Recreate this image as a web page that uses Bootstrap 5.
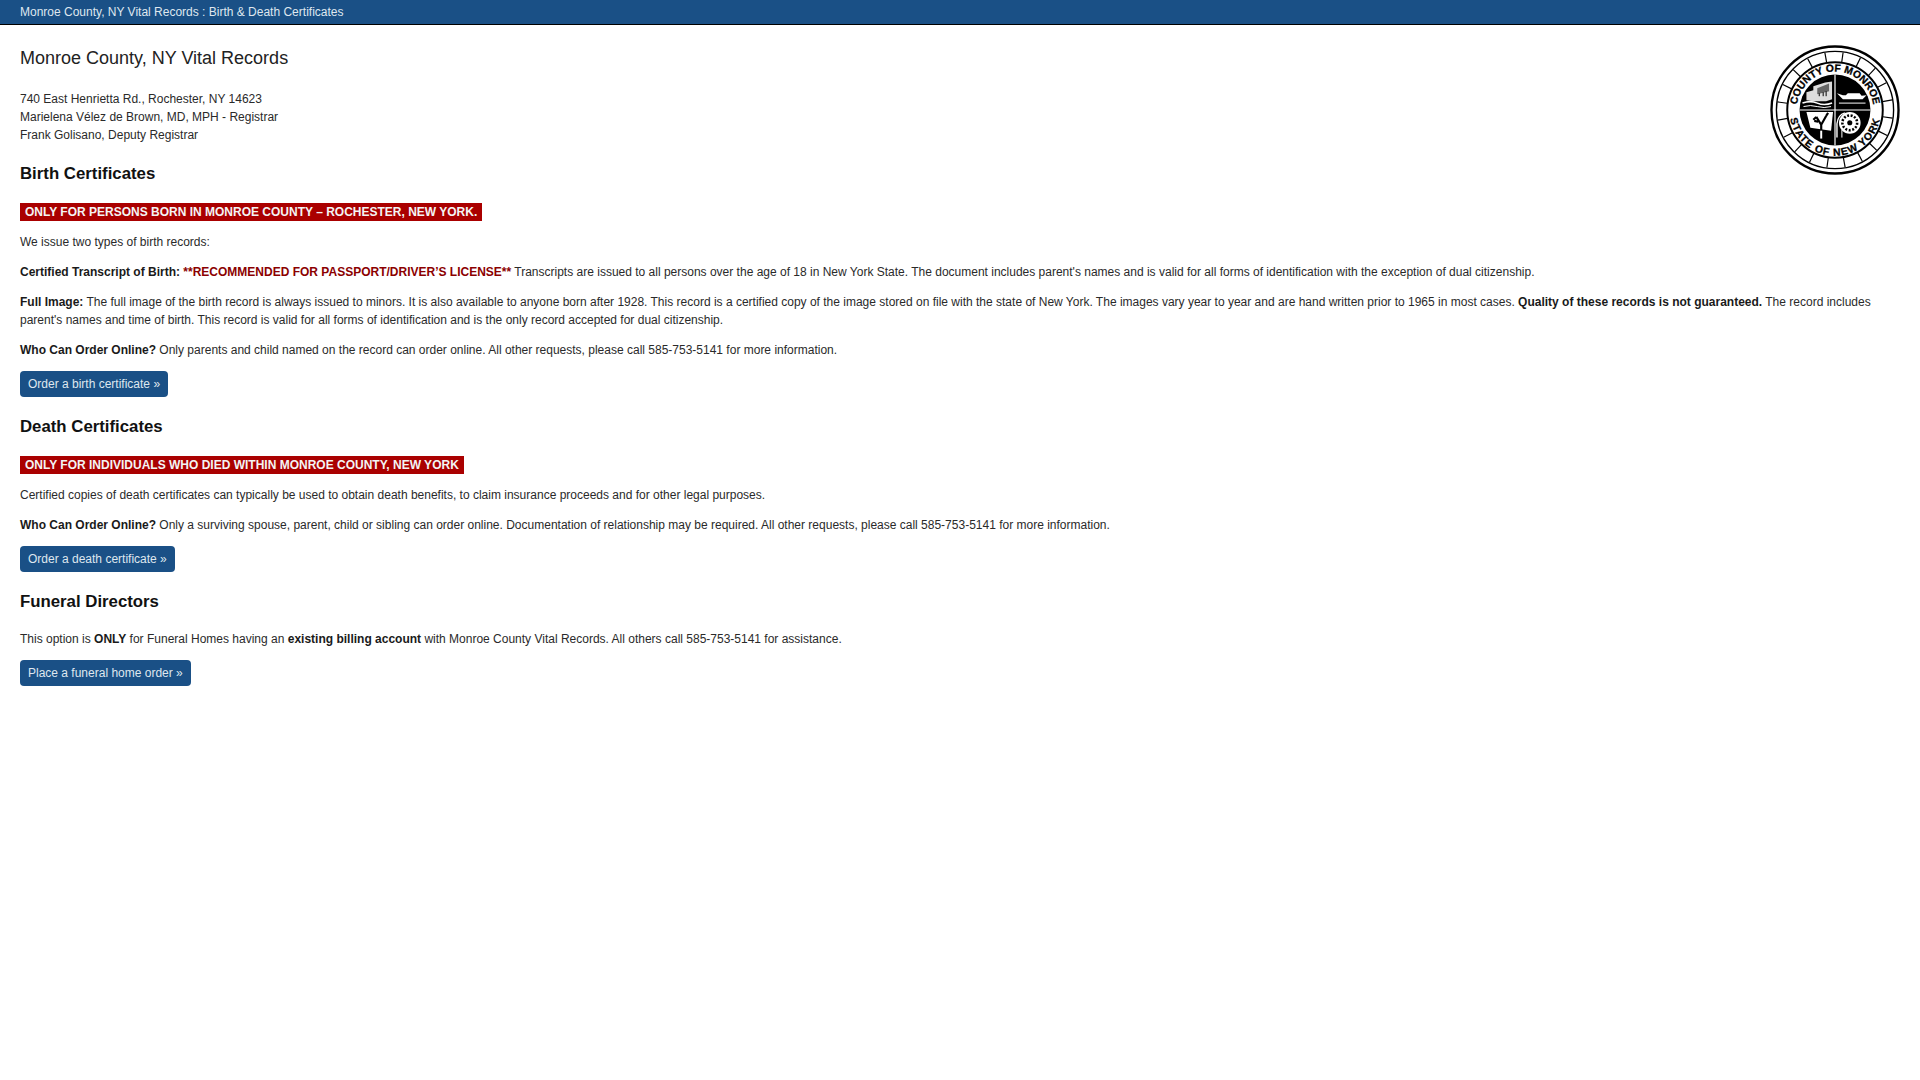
<!DOCTYPE html>
<html lang="en">
<head>
  <meta charset="UTF-8">
  <meta name="viewport" content="width=device-width, initial-scale=1.0">
  <title>Monroe County, NY Vital Records : Birth &amp; Death Certificates</title>
  <link href="https://cdn.jsdelivr.net/npm/bootstrap@5.3.0/dist/css/bootstrap.min.css" rel="stylesheet">
  <style>
    body { font-family: "Liberation Sans", Arial, sans-serif; font-size: 12px; line-height: 18px; color: #2a2a2a; background: #fff; }
    .top-strip { background: #1a5086; color: #dfe7ef; height: 25px; line-height: 24px; padding: 0 20px; border-bottom: 1px solid #000; }
    .page-body { padding: 0 20px; }
    .seal-box { float: right; width: 130px; height: 130px; margin: -1px 0 0 0; }
    .site-title { font-size: 18px; font-weight: 400; line-height: 24px; margin: 21px 0 20px; color: #222; }
    .page-body .addr { margin: 0 0 18px; }
    .sect-title { font-size: 16.8px; font-weight: 700; line-height: 24px; color: #111; margin: 0 0 16px; }
    .only-flag { display: inline-block; background: #a00; color: #f4f4f4; font-weight: 700; line-height: 18px; padding: 0 5px; vertical-align: top; }
    .flag-row { height: 18px; margin: 17px 0 12px; }
    .page-body p { margin: 0 0 12px; }
    .warn-red { color: #8b0000; font-weight: 700; }
    .page-body b { color: #1a1a1a; }
    .order-btn { display: inline-block; background: #1a5086; border: 0; border-radius: 4px; color: #dfe7ef; font-size: 12px; line-height: 18px; padding: 4px 8px; text-decoration: none; }
    .btn-row { height: 26px; margin: 0 0 18px; }
  </style>
</head>
<body>
  <div class="top-strip">Monroe County, NY Vital Records : Birth &amp; Death Certificates</div>

  <div class="page-body">
    <div class="seal-box">
      <svg width="130" height="130" viewBox="0 0 132 132">
        <defs>
          <path id="arcTop" d="M 27 66 A 39 39 0 0 1 105 66"/>
          <path id="arcBot" d="M 19.5 66 A 46.5 46.5 0 0 0 112.5 66"/>
        </defs>
        <circle cx="66" cy="66" r="64.5" fill="#fff" stroke="#000" stroke-width="2.4"/>
        <circle cx="66" cy="66" r="59.5" fill="none" stroke="#000" stroke-width="1.4"/>
        <circle cx="66" cy="66" r="48.5" fill="none" stroke="#000" stroke-width="2"/>
        <g stroke="#000" stroke-width="1.2">
          <line x1="66" y1="7" x2="66" y2="17" transform="rotate(8 66 66)"/>
          <line x1="66" y1="7" x2="66" y2="17" transform="rotate(26 66 66)"/>
          <line x1="66" y1="7" x2="66" y2="17" transform="rotate(44 66 66)"/>
          <line x1="66" y1="7" x2="66" y2="17" transform="rotate(62 66 66)"/>
          <line x1="66" y1="7" x2="66" y2="17" transform="rotate(80 66 66)"/>
          <line x1="66" y1="7" x2="66" y2="17" transform="rotate(98 66 66)"/>
          <line x1="66" y1="7" x2="66" y2="17" transform="rotate(116 66 66)"/>
          <line x1="66" y1="7" x2="66" y2="17" transform="rotate(134 66 66)"/>
          <line x1="66" y1="7" x2="66" y2="17" transform="rotate(152 66 66)"/>
          <line x1="66" y1="7" x2="66" y2="17" transform="rotate(170 66 66)"/>
          <line x1="66" y1="7" x2="66" y2="17" transform="rotate(188 66 66)"/>
          <line x1="66" y1="7" x2="66" y2="17" transform="rotate(206 66 66)"/>
          <line x1="66" y1="7" x2="66" y2="17" transform="rotate(224 66 66)"/>
          <line x1="66" y1="7" x2="66" y2="17" transform="rotate(242 66 66)"/>
          <line x1="66" y1="7" x2="66" y2="17" transform="rotate(260 66 66)"/>
          <line x1="66" y1="7" x2="66" y2="17" transform="rotate(278 66 66)"/>
          <line x1="66" y1="7" x2="66" y2="17" transform="rotate(296 66 66)"/>
          <line x1="66" y1="7" x2="66" y2="17" transform="rotate(314 66 66)"/>
          <line x1="66" y1="7" x2="66" y2="17" transform="rotate(332 66 66)"/>
          <line x1="66" y1="7" x2="66" y2="17" transform="rotate(350 66 66)"/>
        </g>
        <text font-family="Liberation Sans, Arial, sans-serif" font-size="10.5" font-weight="700" fill="#000" text-anchor="middle" stroke="#000" stroke-width=".3">
          <textPath href="#arcTop" startOffset="50%">COUNTY OF MONROE</textPath>
        </text>
        <text font-family="Liberation Sans, Arial, sans-serif" font-size="10.5" font-weight="700" fill="#000" text-anchor="middle" stroke="#000" stroke-width=".3" letter-spacing="1">
          <textPath href="#arcBot" startOffset="50%">STATE OF NEW YORK</textPath>
        </text>
        <circle cx="66" cy="66" r="36" fill="#000"/>
        <g stroke="#fff" stroke-width="1.2">
          <line x1="66" y1="30" x2="66" y2="102"/>
          <line x1="30" y1="66" x2="102" y2="66"/>
        </g>
        <!-- top left: buildings over water -->
        <path d="M37 56v-8l7-2v-4l12-4 7-1v18l-6 2H44z" fill="#ddd"/>
        <path d="M48 44l12-5v8l-12 3z" fill="#666"/>
        <path d="M50 52v-3m4 3v-4m3 4v-5" stroke="#000" stroke-width="1"/>
        <path d="M33 59q8-3 15 0t15 0" fill="none" stroke="#fff" stroke-width="1.6"/>
        <path d="M34 62.500q7-2 14 0t14 0" fill="none" stroke="#fff" stroke-width="1"/>
        <!-- top right: boat -->
        <path d="M68 49l6 6h20l4-4-5 .6-2-2.600h-12l-2 2h-3l-3-1z" fill="#fff"/>
        <path d="M70 59h27" stroke="#fff" stroke-width="1"/>
        <!-- bottom left: tree scene -->
        <path d="M37 68h27l-2 19-21-3z" fill="#fff"/>
        <path d="M52 88V81M52 81l-5-8M52 81l5-9M47 73l-3 3M57 72l2-3M49 78l-4-1" stroke="#000" stroke-width="2.200" fill="none"/>
        <path d="M52 95V87" stroke="#fff" stroke-width="2"/>
        <!-- bottom right: gear and film roll -->
        <circle cx="81" cy="79" r="11" fill="#fff"/>
        <circle cx="81" cy="79" r="7.500" fill="none" stroke="#000" stroke-width="2.600" stroke-dasharray="2 1.600"/>
        <circle cx="81" cy="79" r="2.600" fill="#000"/>
        <path d="M68 94V80q1-9 8-11" fill="none" stroke="#fff" stroke-width="1.400"/>
        <path d="M73 94V86" stroke="#fff" stroke-width="1"/>
      </svg>
    </div>

    <h1 class="site-title">Monroe County, NY Vital Records</h1>
    <p class="addr">740 East Henrietta Rd., Rochester, NY 14623<br>Marielena Vélez de Brown, MD, MPH - Registrar<br>Frank Golisano, Deputy Registrar</p>

    <h2 class="sect-title">Birth Certificates</h2>
    <div class="flag-row"><span class="only-flag">ONLY FOR PERSONS BORN IN MONROE COUNTY – ROCHESTER, NEW YORK.</span></div>
    <p>We issue two types of birth records:</p>
    <p><b>Certified Transcript of Birth:</b> <span class="warn-red">**RECOMMENDED FOR PASSPORT/DRIVER’S LICENSE**</span> Transcripts are issued to all persons over the age of 18 in New York State. The document includes parent's names and is valid for all forms of identification with the exception of dual citizenship.</p>
    <p><b>Full Image:</b> The full image of the birth record is always issued to minors. It is also available to anyone born after 1928. This record is a certified copy of the image stored on file with the state of New York. The images vary year to year and are hand written prior to 1965 in most cases. <b>Quality of these records is not guaranteed.</b> The record includes parent's names and time of birth. This record is valid for all forms of identification and is the only record accepted for dual citizenship.</p>
    <p><b>Who Can Order Online?</b> Only parents and child named on the record can order online. All other requests, please call 585-753-5141 for more information.</p>
    <div class="btn-row"><a class="order-btn" href="#">Order a birth certificate »</a></div>

    <h2 class="sect-title">Death Certificates</h2>
    <div class="flag-row"><span class="only-flag">ONLY FOR INDIVIDUALS WHO DIED WITHIN MONROE COUNTY, NEW YORK</span></div>
    <p>Certified copies of death certificates can typically be used to obtain death benefits, to claim insurance proceeds and for other legal purposes.</p>
    <p><b>Who Can Order Online?</b> Only a surviving spouse, parent, child or sibling can order online. Documentation of relationship may be required. All other requests, please call 585-753-5141 for more information.</p>
    <div class="btn-row"><a class="order-btn" href="#">Order a death certificate »</a></div>

    <h2 class="sect-title">Funeral Directors</h2>
    <p>This option is <b>ONLY</b> for Funeral Homes having an <b>existing billing account</b> with Monroe County Vital Records. All others call 585-753-5141 for assistance.</p>
    <div class="btn-row"><a class="order-btn" href="#">Place a funeral home order »</a></div>
  </div>

  <script src="https://cdn.jsdelivr.net/npm/bootstrap@5.3.0/dist/js/bootstrap.bundle.min.js"></script>
</body>
</html>
